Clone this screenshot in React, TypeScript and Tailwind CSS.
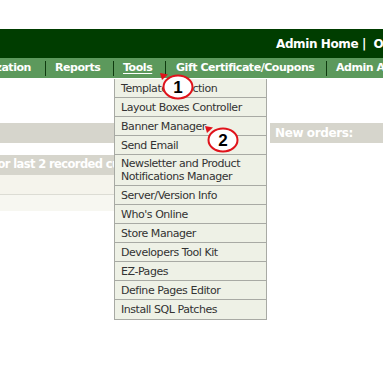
import React from "react";

const navItems = [
  { label: "Reports", w: "w-[68px]", pl: "pl-[9px]" },
  { label: "Tools", w: "w-[52px]", pl: "pl-[9px]" },
  { label: "Gift Certificate/Coupons", w: "w-[161px]", pl: "pl-[10px]" },
  { label: "Admin Access Management", w: "w-[200px]", pl: "pl-[9px]" },
];

const toolItems = [
  { label: "Template Selection" },
  { label: "Layout Boxes Controller" },
  { label: "Banner Manager" },
  { label: "Send Email" },
  { label: "Newsletter and Product Notifications Manager", tall: true },
  { label: "Server/Version Info" },
  { label: "Who's Online" },
  { label: "Store Manager" },
  { label: "Developers Tool Kit" },
  { label: "EZ-Pages" },
  { label: "Define Pages Editor" },
  { label: "Install SQL Patches" },
];

function Callout({ n, className }: { n: string; className: string }) {
  return (
    <div className={`absolute ${className}`}>
      <svg width="40" height="32" viewBox="0 0 40 32" className="absolute left-0 top-0">
        <path d="M0 0 L8 1.5 L2 7 Z" fill="#e0131b" />
        <ellipse cx="18" cy="14" rx="14.5" ry="11.5" fill="#fff" stroke="#e0131b" strokeWidth="2" />
      </svg>
      <span className="absolute left-[3px] top-[3px] flex h-[23px] w-[30px] items-center justify-center font-['Liberation_Sans',sans-serif] text-[17px] font-bold text-black">
        {n}
      </span>
    </div>
  );
}

export default function App() {
  return (
    <div className="relative h-[380px] w-[383px] overflow-hidden bg-white font-['DejaVu_Sans',sans-serif]">
      <div className="h-[29px]" />

      <div className="flex h-[29px] items-center whitespace-nowrap bg-[#003d00] pl-[276px] text-[12px] font-bold tracking-[-0.4px] text-white">
        Admin Home |&nbsp; Online Catalog
      </div>

      <div className="flex h-[20px] items-center whitespace-nowrap bg-[#5c995c] text-[11px] font-bold tracking-[-0.45px] text-white">
        <span className="-ml-[55px] w-[100px] shrink-0 pr-[14px] text-right">Localization</span>
        {navItems.map((item) => (
          <div key={item.label} className={`flex shrink-0 items-center ${item.w}`}>
            <span className="h-[15px] w-px shrink-0 bg-[#0f3a0f]" />
            <span className={`${item.pl} ${item.label === "Tools" ? "underline underline-offset-2" : ""}`}>{item.label}</span>
          </div>
        ))}
      </div>

      <div className="flex gap-[4px] pt-[45px]">
        <div className="w-[266px]">
          <div className="h-[20px] bg-[#d6d5cc]" />
          <div className="h-[12px]" />
          <div className="flex h-[20px] items-center overflow-hidden whitespace-nowrap bg-[#d6d5cc] text-[11.5px] font-bold tracking-[-0.6px] text-white">
            <span className="-ml-[7px]">for last 2 recorded customers</span>
          </div>
          <div className="h-[20px] border-b border-[#dcdcd4] bg-[#f5f4ec]" />
          <div className="h-[16px] bg-[#f7f7f1]" />
        </div>
        <div className="flex-1">
          <div className="flex h-[20px] items-center bg-[#d6d5cc] pl-[5px] text-[12px] font-bold tracking-[-0.4px] text-white">New orders:</div>
        </div>
      </div>

      <div className="absolute left-[114px] top-[79px] w-[153px] border border-t-0 border-[#a8aaa4] bg-[#eef1e6] text-[11px] tracking-[-0.45px] text-[#333]">
        {toolItems.map((t) => (
          <div
            key={t.label}
            className={`flex items-center border-b border-[#a8aaa4] px-[6px] leading-[13px] last:border-b-0 ${t.tall ? "h-[31px]" : "h-[19px]"}`}
          >
            {t.label}
          </div>
        ))}
      </div>

      <Callout n="1" className="left-[160px] top-[73px]" />
      <Callout n="2" className="left-[205px] top-[126px]" />
    </div>
  );
}
